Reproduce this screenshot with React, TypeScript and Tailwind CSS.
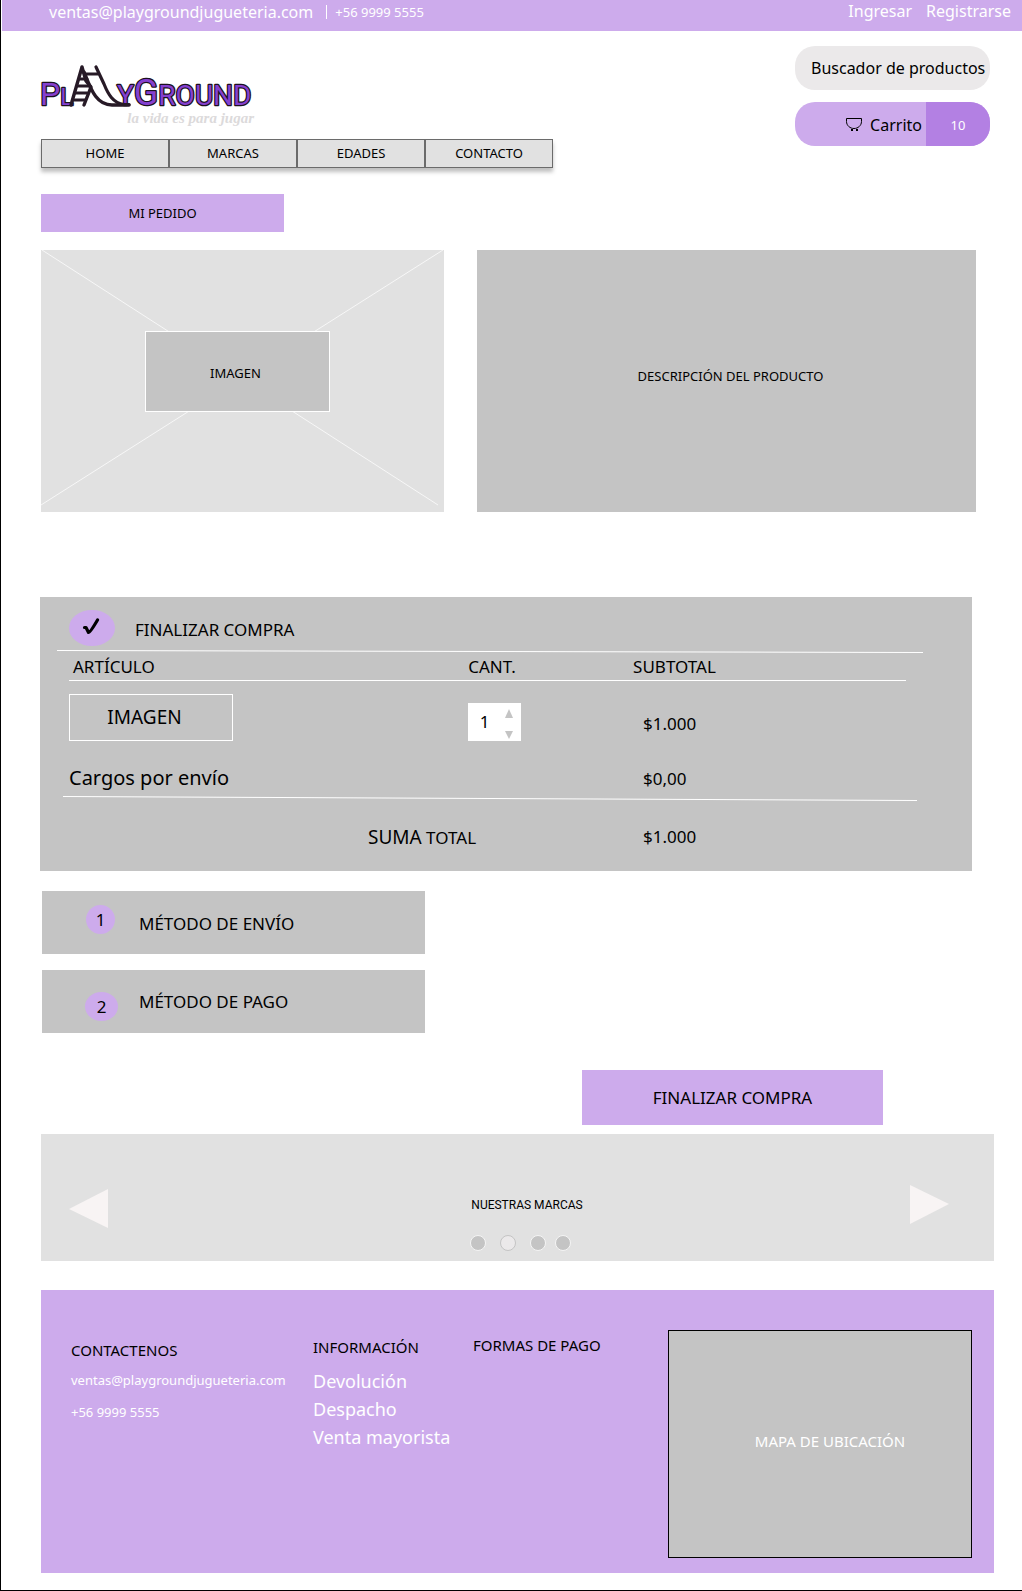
import { useState } from "react";

const navItems = ["HOME", "MARCAS", "EDADES", "CONTACTO"];
const infoLinks = ["Devolución", "Despacho", "Venta mayorista"];

function TopBar() {
  return (
    <div className="ml-px flex h-[31px] items-start justify-between bg-[#cdabec] pr-[11px] pl-[47px] text-white">
      <div className="flex items-center">
        <a href="mailto:ventas@playgroundjugueteria.com" className="text-base leading-6">
          ventas@playgroundjugueteria.com
        </a>
        <span className="mr-2 ml-[13px] h-[14px] w-px bg-white" />
        <a href="tel:+5699995555" className="text-[13px] leading-6">
          +56 9999 5555
        </a>
      </div>
      <div className="flex gap-[14px] text-base leading-[22px]">
        <a href="#ingresar">Ingresar</a>
        <a href="#registrarse">Registrarse</a>
      </div>
    </div>
  );
}

function Logo() {
  return (
    <a href="#inicio" className="block w-[213px]">
      <svg viewBox="0 0 213 50" className="block h-[50px] w-[213px] overflow-visible" role="img" aria-label="PlayGround">
        <g
          fill="#8540cf"
          stroke="#1b1020"
          strokeWidth="2.5"
          strokeLinejoin="round"
          paintOrder="stroke"
          fontFamily="Roboto, sans-serif"
          fontWeight="400"
        >
          <text x="-1" y="46" fontSize="32">
            P<tspan fontSize="24">L</tspan>
          </text>
          <text x="76" y="46" fontSize="28">
            Y<tspan fontSize="36">G</tspan>ROUND
          </text>
        </g>
        <g fill="none" stroke="#271a26" strokeLinecap="round" strokeLinejoin="round">
          <path d="M41 8 30 46M41 8 45 22 50 28 43 46" strokeWidth="3.4" />
          <path d="M38 20H46M36 27H49M34 34H46M32 41H44" strokeWidth="3" />
          <path d="M44 15H58M55 8 63 25C67 35 72 44 83 45.500H88" strokeWidth="3.2" />
          <path d="M43 13C49 27 54 46 71 46H88" strokeWidth="3.4" />
        </g>
      </svg>
      <span className="block text-right font-['Liberation_Serif',serif] text-[15px] leading-[18px] font-bold text-[#dcdadb] italic">
        la vida es para jugar
      </span>
    </a>
  );
}

function CartIcon() {
  return (
    <svg viewBox="0 0 16 13" className="h-[13px] w-4" fill="none" stroke="#000" aria-hidden="true">
      <path d="M.5.5h15v3c0 4-3.5 7-7.5 7s-7.5-3-7.5-7z" />
      <path d="M5 12h2M10 12h2" strokeWidth="2" />
    </svg>
  );
}

function Header() {
  return (
    <header className="flex justify-between pr-8 pl-10">
      <div className="pt-7">
        <Logo />
        <nav className="mt-3 flex shadow-[0_4px_4px_rgba(0,0,0,0.25)]">
          {navItems.map((item) => (
            <a
              key={item}
              href={"#" + item.toLowerCase()}
              className="flex h-[29px] w-32 items-center justify-center border border-[#6b6b6b] bg-[#e1e1e1] text-[13px]"
            >
              {item}
            </a>
          ))}
        </nav>
      </div>
      <div className="flex w-[195px] flex-col gap-3 pt-[15px]">
        <input
          type="text"
          aria-label="Buscador de productos"
          placeholder="Buscador de productos"
          className="h-11 rounded-[20px] bg-[#ebe9ea] pl-4 text-base text-black outline-none placeholder:text-black"
        />
        <button className="flex h-11 overflow-hidden rounded-[20px] bg-[#cdabec] text-base">
          <span className="flex h-full flex-1 items-center justify-end gap-2 pt-px pr-1">
            <CartIcon />
            Carrito
          </span>
          <span className="flex h-full w-16 items-center justify-center bg-[#b380e3] pt-1 text-[13px] text-white">10</span>
        </button>
      </div>
    </header>
  );
}

function Product() {
  return (
    <section className="mt-[18px] mr-[46px] ml-10 grid grid-cols-[403fr_499fr] gap-[33px]">
      <div className="relative flex h-[262px] items-center justify-center bg-[#e1e1e1]">
        <svg
          viewBox="0 0 403 262"
          preserveAspectRatio="none"
          className="absolute inset-0 h-full w-full"
          stroke="#f7f7f7"
          aria-hidden="true"
        >
          <path d="M1 0 397 255M402 0 0 255" />
        </svg>
        <div className="relative mr-[10px] mb-[19px] flex h-[81px] w-[185px] items-center justify-center border border-white bg-[#c4c4c4] pt-1 pr-1 text-[13px]">
          IMAGEN
        </div>
      </div>
      <div className="flex h-[262px] items-center justify-center bg-[#c4c4c4] pl-2 pb-2 text-[13px]">
        DESCRIPCIÓN DEL PRODUCTO
      </div>
    </section>
  );
}

function Quantity({ value, onChange }: { value: number; onChange: (n: number) => void }) {
  return (
    <div className="flex h-[38px] w-[53px] bg-white">
      <input
        aria-label="Cantidad"
        inputMode="numeric"
        value={value}
        onChange={(e) => onChange(Math.max(1, Number(e.target.value) || 1))}
        className="w-[33px] text-center text-[17px] outline-none"
      />
      <div className="flex flex-1 flex-col items-center justify-between pt-[6px] pr-1 pb-[2px]">
        <button aria-label="Aumentar cantidad" onClick={() => onChange(value + 1)}>
          <svg viewBox="0 0 8 9" className="block h-[9px] w-2" fill="#c4c4c4">
            <path d="M4 0 8 9H0z" />
          </svg>
        </button>
        <button aria-label="Reducir cantidad" onClick={() => onChange(Math.max(1, value - 1))}>
          <svg viewBox="0 0 8 8" className="block h-2 w-2" fill="#c4c4c4">
            <path d="M0 0H8L4 8z" />
          </svg>
        </button>
      </div>
    </div>
  );
}

function Checkout() {
  const [quantity, setQuantity] = useState(1);
  const price = "$" + quantity + ".000";
  return (
    <section className="mt-[85px] mr-[50px] ml-[39px] h-[274px] bg-[#c4c4c4] pt-[13px] text-[17px]">
      <div className="flex h-10 pl-[29px]">
        <span className="flex h-9 w-[46px] items-center justify-center rounded-[50%] bg-[#cdabec]">
          <svg viewBox="0 0 18 18" className="mr-[2px] mb-[3px] h-[18px] w-[18px]" fill="none" stroke="#000" strokeLinecap="round" strokeLinejoin="round" aria-hidden="true">
            <path d="M2.5 9.500 4 9.500 6.500 14.500C8 14.500 12 8 15.500 2" strokeWidth="3.2" />
          </svg>
        </span>
        <h2 className="ml-5 leading-10">FINALIZAR COMPRA</h2>
      </div>
      <svg viewBox="0 0 866 3" preserveAspectRatio="none" className="ml-[17px] block h-[3px] w-[calc(100%-66px)]" stroke="#fff" aria-hidden="true">
        <path d="M0 .5 866 2.500" />
      </svg>
      <table className="mr-[66px] ml-[29px] w-[calc(100%-95px)] table-fixed border-collapse text-left">
        <colgroup>
          <col className="w-[47.7%]" />
          <col className="w-[19.7%]" />
          <col />
        </colgroup>
        <thead>
          <tr className="h-[27px] border-b border-white">
            <th className="pl-1 font-normal">ARTÍCULO</th>
            <th className="font-normal">CANT.</th>
            <th className="font-normal">SUBTOTAL</th>
          </tr>
        </thead>
        <tbody>
          <tr className="h-[75px] align-bottom">
            <td className="pb-[14px]">
              <div className="flex h-[47px] w-[164px] items-center justify-center border border-white pr-[13px] text-[19px]">
                IMAGEN
              </div>
            </td>
            <td className="pb-[14px]">
              <Quantity value={quantity} onChange={setQuantity} />
            </td>
            <td className="pb-[19px] pl-[10px]">{price}</td>
          </tr>
          <tr className="h-[41px]">
            <td className="pt-1 text-xl">Cargos por envío</td>
            <td />
            <td className="pt-[6px] pl-[10px]">$0,00</td>
          </tr>
          <tr>
            <td colSpan={3} className="p-0">
              <svg viewBox="0 0 854 5" preserveAspectRatio="none" className="-ml-[6px] block h-[5px] w-[calc(100%+17px)]" stroke="#fff" aria-hidden="true">
                <path d="M0 .5 854 4.500" />
              </svg>
            </td>
          </tr>
          <tr className="h-[72px]">
            <td colSpan={2} className="pl-[299px]">
              <span className="text-[19px]">SUMA</span> TOTAL
            </td>
            <td className="pl-[10px]">{price}</td>
          </tr>
        </tbody>
      </table>
    </section>
  );
}

function Steps() {
  return (
    <section className="mt-5 ml-[41px] flex w-[383px] flex-col gap-4 text-[17px]">
      <button className="flex h-[63px] items-start bg-[#c4c4c4] pt-[14px] pl-11">
        <span className="flex h-[29px] w-[29px] items-center justify-center rounded-[50%] bg-[#cdabec]">1</span>
        <span className="ml-6 leading-[38px]">MÉTODO DE ENVÍO</span>
      </button>
      <button className="flex h-[63px] items-start bg-[#c4c4c4] pt-3 pl-[43px]">
        <span className="mt-[10px] flex h-[29px] w-[33px] items-center justify-center rounded-[50%] bg-[#cdabec]">2</span>
        <span className="ml-[21px] leading-10">MÉTODO DE PAGO</span>
      </button>
    </section>
  );
}

function Brands() {
  return (
    <section className="mt-[9px] mr-7 ml-10 flex h-[127px] justify-between bg-[#e1e1e1] pr-[45px] pl-7">
      <button aria-label="Marcas anteriores" className="mt-[55px] self-start">
        <svg viewBox="0 0 39 39" className="block h-[39px] w-[39px]" fill="#f8f4f4">
          <path d="M39 0V39L0 20z" />
        </svg>
      </button>
      <div className="flex flex-col items-center pt-[62px] pl-9">
        <h2 className="font-[Roboto,sans-serif] text-xs leading-[18px]">NUESTRAS MARCAS</h2>
        <div className="mt-[21px] flex pr-[14px]">
          <button aria-label="Página 1" className="h-4 w-4 rounded-full border border-[#f5f5f5] bg-[#c4c4c4]" />
          <button aria-label="Página 2" className="ml-[14px] h-4 w-4 rounded-full border border-[#c4c4c4] bg-[#ebe9ea]" />
          <button aria-label="Página 3" className="ml-[14px] h-4 w-4 rounded-full border border-[#f5f5f5] bg-[#c4c4c4]" />
          <button aria-label="Página 4" className="ml-[9px] h-4 w-4 rounded-full border border-[#f5f5f5] bg-[#c4c4c4]" />
        </div>
      </div>
      <button aria-label="Marcas siguientes" className="mt-[51px] self-start">
        <svg viewBox="0 0 39 39" className="block h-[39px] w-[39px]" fill="#f8f4f4">
          <path d="M0 0V39L39 19z" />
        </svg>
      </button>
    </section>
  );
}

function Footer() {
  return (
    <footer className="mt-[29px] mr-7 mb-[17px] ml-10 grid h-[283px] grid-cols-[242fr_160fr_195fr_304fr] bg-[#cdabec] pt-10 pr-[22px] pl-[30px] text-[15px] text-white">
      <section className="flex flex-col items-start pt-2">
        <h3 className="leading-6 text-black">CONTACTENOS</h3>
        <a href="mailto:ventas@playgroundjugueteria.com" className="mt-[6px] text-[13px] leading-6">
          ventas@playgroundjugueteria.com
        </a>
        <a href="tel:+5699995555" className="mt-2 text-[13px] leading-6">
          +56 9999 5555
        </a>
      </section>
      <section className="flex flex-col items-start pt-[5px]">
        <h3 className="leading-6 text-black">INFORMACIÓN</h3>
        <ul className="mt-2 text-lg leading-7">
          {infoLinks.map((label) => (
            <li key={label}>
              <a href="#informacion">{label}</a>
            </li>
          ))}
        </ul>
      </section>
      <section className="pt-[3px]">
        <h3 className="leading-6 text-black">FORMAS DE PAGO</h3>
      </section>
      <div className="flex h-[228px] items-center justify-center border border-black bg-[#c4c4c4] pb-[6px] pl-5">
        MAPA DE UBICACIÓN
      </div>
    </footer>
  );
}

export default function App() {
  return (
    <div className="border-b border-l border-black bg-white font-['Noto_Sans',sans-serif] text-black">
      <TopBar />
      <Header />
      <main>
        <h1 className="mt-[26px] ml-10 flex h-[38px] w-[243px] items-center justify-center bg-[#cdabec] pt-[2px] text-[13px]">
          MI PEDIDO
        </h1>
        <Product />
        <Checkout />
        <Steps />
        <div className="mt-[37px] mr-[139px] flex justify-end">
          <button className="h-[55px] w-[301px] bg-[#cdabec] text-[17px]">FINALIZAR COMPRA</button>
        </div>
        <Brands />
      </main>
      <Footer />
    </div>
  );
}
